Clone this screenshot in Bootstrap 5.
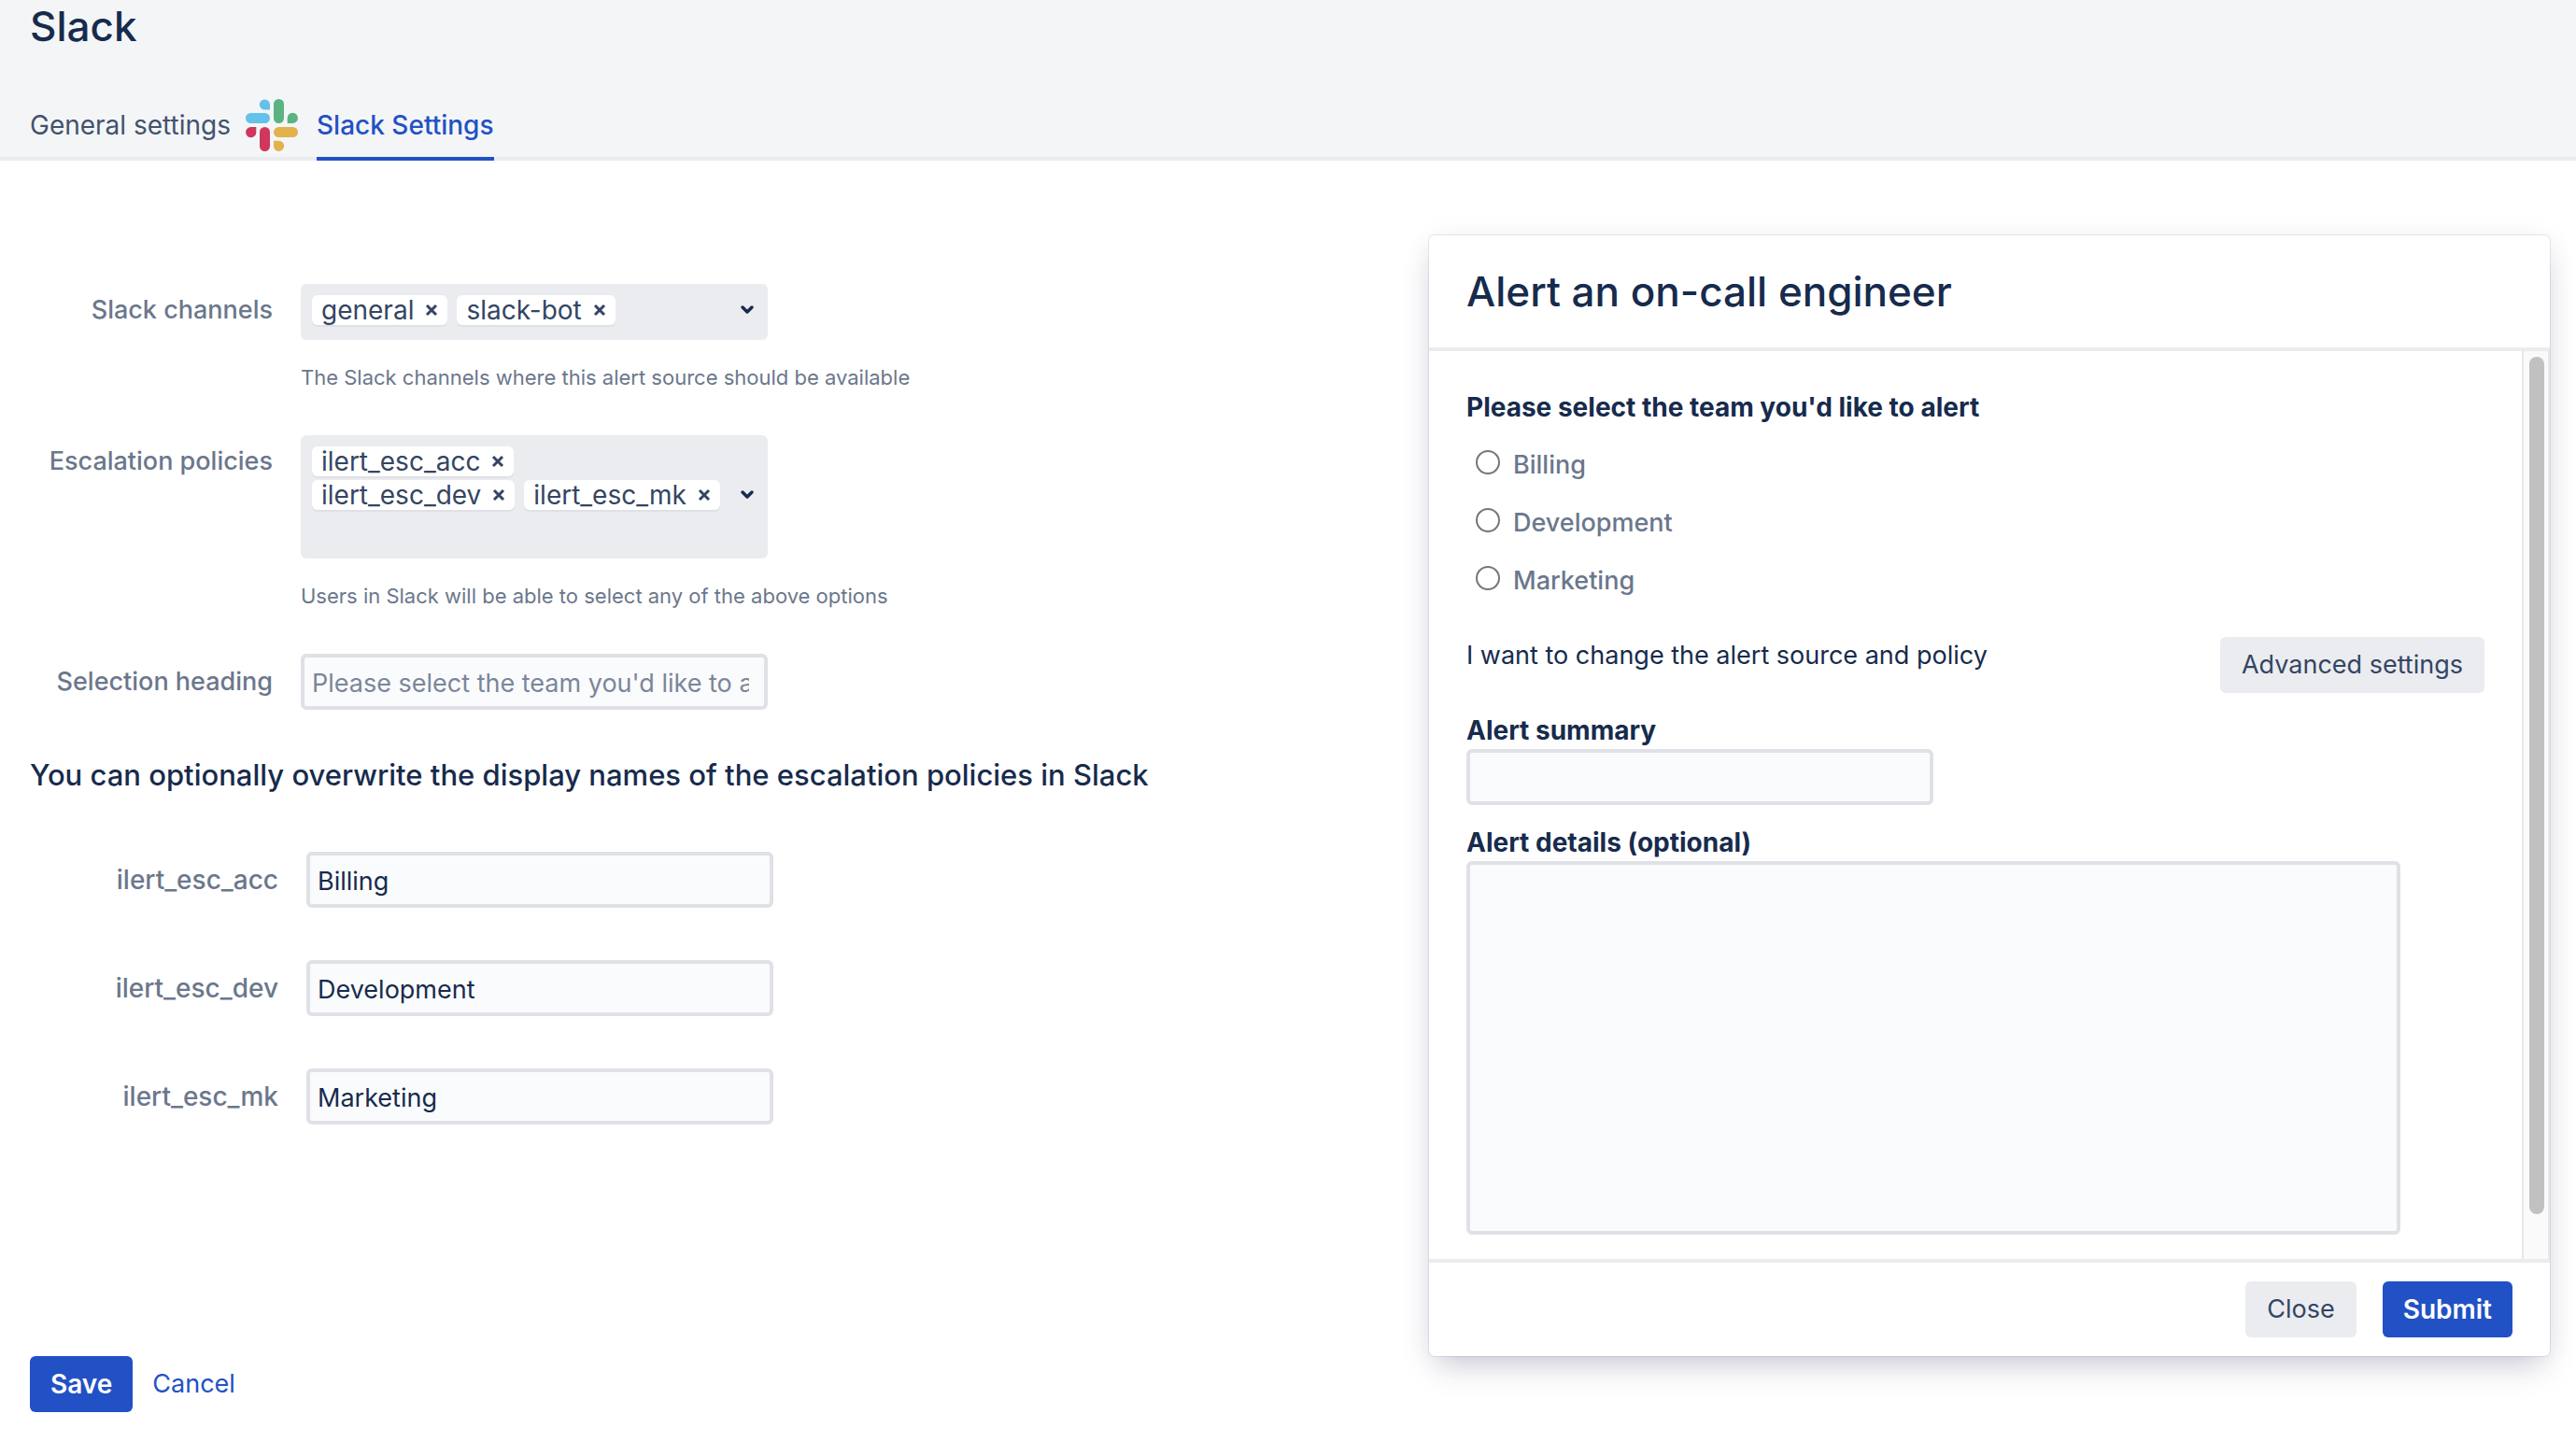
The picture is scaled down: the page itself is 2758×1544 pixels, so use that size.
<!DOCTYPE html>
<html lang="en">
<head>
<meta charset="utf-8">
<meta name="viewport" content="width=device-width, initial-scale=1">
<title>Slack settings</title>
<link href="https://cdn.jsdelivr.net/npm/bootstrap@5.3.0/dist/css/bootstrap.min.css" rel="stylesheet">
<style>
  :root { --ink: #172b4d; --muted: #6b778c; --soft: #ebecf0; --line: #dfe1e6; --blue: #2251c5; }
  body { font-family: Inter, "Liberation Sans", sans-serif; font-size: 27px; line-height: 40px; color: var(--ink); background: #fff; }
  .page-head { background: #f4f5f7; border-bottom: 4px solid var(--soft); padding: 0 32px; }
  .page-title { font-size: 44px; line-height: 56px; font-weight: 500; margin-bottom: 50px; }
  .tab-link { display: block; padding: 8px 0 14px; margin-bottom: -4px; border-bottom: 4px solid transparent; font-size: 28px; color: #42526e; text-decoration: none; }
  .tab-link.active { color: var(--blue); border-color: var(--blue); font-weight: 500; }
  .slack-mark { margin: 0 20px 0 16px; }
  .page-body { padding: 80px 28px 0 32px; gap: 32px; }
  .settings { padding-top: 52px; }
  .field-list { gap: 46px; }
  .field-row { display: flex; align-items: flex-start; gap: 30px; }
  .field-name { flex: 0 0 260px; padding-top: 8px; text-align: right; font-weight: 500; color: var(--muted); white-space: nowrap; }
  .field-name.for-input { padding-top: 10px; }
  .names { gap: 56px; margin-top: 62px; }
  .names .field-name { flex-basis: 266px; font-size: 28px; }
  .hint { font-size: 22px; line-height: 32px; color: var(--muted); margin: 24px 0 0; }
  .picker { width: 500px; padding: 12px 14px 16px 12px; background: var(--soft); border-radius: 6px; }
  .picker-sm { min-height: 60px; }
  .picker-lg { min-height: 132px; }
  .picker-tags { gap: 4px; }
  .tag-line { gap: 10px; }
  .tag { display: flex; align-items: center; gap: 12px; height: 32px; padding: 0 10px; font-size: 28px; line-height: 32px; color: #344563; background: #fff; border-radius: 6px; box-shadow: 0 2px 0 var(--line); white-space: nowrap; }
  .plain { display: flex; padding: 0; border: 0; background: none; color: inherit; }
  .field-box { width: 500px; height: 60px; padding: 2px 16px 0 8px; border: 4px solid var(--line); border-radius: 6px; background: #fafbfc; color: var(--ink); font-size: 27px; line-height: 40px; }
  .field-box::placeholder { color: #7a869a; }
  .field-box.area { width: 1000px; max-width: 100%; height: 400px; resize: none; display: block; }
  .section-title { font-size: 31px; line-height: 40px; font-weight: 500; margin: 50px 0 0; }
  .btn { --bs-btn-padding-x: 22px; --bs-btn-padding-y: 10px; --bs-btn-font-size: 28px; --bs-btn-line-height: 40px; --bs-btn-border-radius: 6px; --bs-btn-border-width: 0; white-space: nowrap; }
  .btn-main { --bs-btn-bg: var(--blue); --bs-btn-color: #fff; --bs-btn-hover-bg: #1b45ab; --bs-btn-hover-color: #fff; font-weight: 600; }
  .btn-soft { --bs-btn-font-size: 27px; --bs-btn-padding-x: 23px; --bs-btn-bg: var(--soft); --bs-btn-color: #344563; --bs-btn-hover-bg: var(--line); }
  .dialog { flex: 0 1 1200px; border-radius: 6px; background: #fff; box-shadow: 0 0 0 1px rgba(9,30,66,.09), 0 16px 32px -8px rgba(40,40,90,.25), 0 0 32px rgba(9,30,66,.04); }
  .dialog-head { padding: 32px 40px; border-bottom: 4px solid var(--soft); }
  .dialog-head h2 { font-size: 44px; line-height: 56px; font-weight: 500; margin: 0; }
  .dialog-form { padding: 40px 40px 26px; }
  .dialog-foot { padding: 20px 40px; gap: 28px; border-top: 4px solid var(--soft); }
  .strong-label { display: block; font-size: 28px; line-height: 40px; font-weight: 700; margin: 0; }
  .choices { gap: 22px; padding: 22px 0 0 10px; }
  .choice { gap: 14px; }
  .choice input { appearance: none; width: 26px; height: 26px; margin: 4px 0 0; border: 2px solid #767676; border-radius: 50%; background: #fff; }
  .choice input:checked { border: 8px solid var(--blue); }
  .choice label { font-weight: 500; color: var(--muted); }
  .advanced { margin-top: 40px; }
  .alert-field { margin-top: 20px; }
  .scroll-rail { flex: 0 0 30px; padding: 6px 4px 48px 6px; border: solid #e8e8e8; border-width: 0 2px; background: #fafafa; }
  .scroll-grip { width: 16px; height: 100%; border-radius: 8px; background: #c1c1c1; }
  .actions { padding: 0 32px 32px; gap: 21px; }
  .cancel { color: var(--blue); text-decoration: none; }
</style>
</head>
<body>
<header class="page-head">
  <h1 class="page-title">Slack</h1>
  <nav class="d-flex align-items-start" aria-label="Settings">
    <a class="tab-link" href="#general">General settings</a>
    <svg class="slack-mark flex-shrink-0" width="56" height="56" viewBox="0 0 56 56" aria-hidden="true">
      <g fill="#63c1ea"><path d="M26 11.600H20.600A5.600 5.600 0 1 1 26 5.800Z"/><rect x="0" y="15" width="26" height="11" rx="5.500"/></g>
      <g fill="#5bb381"><rect x="30" y="0" width="11" height="26" rx="5.500"/><path d="M44.700 26V20.600A5.600 5.600 0 1 1 50.500 26Z"/></g>
      <g fill="#e2b34b"><rect x="30" y="30" width="26" height="11" rx="5.500"/><path d="M30 44.700H35.400A5.600 5.600 0 1 1 30 50.500Z"/></g>
      <g fill="#cf375c"><path d="M11.300 30V35.400A5.600 5.600 0 1 1 5.500 30Z"/><rect x="15" y="30" width="11" height="26" rx="5.500"/></g>
    </svg>
    <a class="tab-link active" href="#slack" aria-current="page">Slack Settings</a>
  </nav>
</header>

<main>
  <div class="page-body d-flex align-items-start">
    <form class="settings flex-grow-1" id="settings-form">
      <div class="field-list d-flex flex-column">
        <div class="field-row">
          <span class="field-name" id="channels-name">Slack channels</span>
          <div>
            <div class="picker picker-sm d-flex justify-content-between align-items-center" role="group" aria-labelledby="channels-name">
              <div class="picker-tags d-flex flex-column align-self-start">
                <div class="tag-line d-flex">
                  <span class="tag">general <button class="plain" type="button" aria-label="Remove general"><svg width="14" height="14" viewBox="0 0 14 14"><path d="M2 2l10 10M12 2L2 12" stroke="currentColor" stroke-width="3"/></svg></button></span>
                  <span class="tag">slack-bot <button class="plain" type="button" aria-label="Remove slack-bot"><svg width="14" height="14" viewBox="0 0 14 14"><path d="M2 2l10 10M12 2L2 12" stroke="currentColor" stroke-width="3"/></svg></button></span>
                </div>
              </div>
              <button class="plain" type="button" aria-label="Show channels"><svg width="16" height="12" viewBox="0 0 16 12"><path d="M3 3l5 5 5-5" fill="none" stroke="#172b4d" stroke-width="3.500" stroke-linecap="round" stroke-linejoin="round"/></svg></button>
            </div>
            <p class="hint">The Slack channels where this alert source should be available</p>
          </div>
        </div>
        <div class="field-row">
          <span class="field-name" id="policies-name">Escalation policies</span>
          <div>
            <div class="picker picker-lg d-flex justify-content-between align-items-center" role="group" aria-labelledby="policies-name">
              <div class="picker-tags d-flex flex-column align-self-start">
                <div class="tag-line d-flex">
                  <span class="tag">ilert_esc_acc <button class="plain" type="button" aria-label="Remove ilert_esc_acc"><svg width="14" height="14" viewBox="0 0 14 14"><path d="M2 2l10 10M12 2L2 12" stroke="currentColor" stroke-width="3"/></svg></button></span>
                </div>
                <div class="tag-line d-flex">
                  <span class="tag">ilert_esc_dev <button class="plain" type="button" aria-label="Remove ilert_esc_dev"><svg width="14" height="14" viewBox="0 0 14 14"><path d="M2 2l10 10M12 2L2 12" stroke="currentColor" stroke-width="3"/></svg></button></span>
                  <span class="tag">ilert_esc_mk <button class="plain" type="button" aria-label="Remove ilert_esc_mk"><svg width="14" height="14" viewBox="0 0 14 14"><path d="M2 2l10 10M12 2L2 12" stroke="currentColor" stroke-width="3"/></svg></button></span>
                </div>
              </div>
              <button class="plain" type="button" aria-label="Show policies"><svg width="16" height="12" viewBox="0 0 16 12"><path d="M3 3l5 5 5-5" fill="none" stroke="#172b4d" stroke-width="3.500" stroke-linecap="round" stroke-linejoin="round"/></svg></button>
            </div>
            <p class="hint">Users in Slack will be able to select any of the above options</p>
          </div>
        </div>
        <div class="field-row">
          <label class="field-name for-input" for="heading">Selection heading</label>
          <input class="field-box" id="heading" type="text" placeholder="Please select the team you'd like to alert">
        </div>
      </div>

      <h3 class="section-title">You can optionally overwrite the display names of the escalation policies in Slack</h3>

      <div class="names d-flex flex-column">
        <div class="field-row">
          <label class="field-name for-input" for="name-acc">ilert_esc_acc</label>
          <input class="field-box" id="name-acc" type="text" value="Billing">
        </div>
        <div class="field-row">
          <label class="field-name for-input" for="name-dev">ilert_esc_dev</label>
          <input class="field-box" id="name-dev" type="text" value="Development">
        </div>
        <div class="field-row">
          <label class="field-name for-input" for="name-mk">ilert_esc_mk</label>
          <input class="field-box" id="name-mk" type="text" value="Marketing">
        </div>
      </div>
    </form>

    <section class="dialog" aria-labelledby="dialog-title">
      <div class="dialog-head"><h2 id="dialog-title">Alert an on-call engineer</h2></div>
      <div class="d-flex">
        <form class="dialog-form flex-grow-1" id="alert-form">
          <fieldset>
            <legend class="strong-label">Please select the team you'd like to alert</legend>
            <div class="choices d-flex flex-column">
              <div class="choice d-flex align-items-start"><input type="radio" name="team" id="team-billing"><label for="team-billing">Billing</label></div>
              <div class="choice d-flex align-items-start"><input type="radio" name="team" id="team-dev"><label for="team-dev">Development</label></div>
              <div class="choice d-flex align-items-start"><input type="radio" name="team" id="team-mk"><label for="team-mk">Marketing</label></div>
            </div>
          </fieldset>
          <div class="advanced d-flex justify-content-between align-items-start">
            <span>I want to change the alert source and policy</span>
            <button class="btn btn-soft" type="button">Advanced settings</button>
          </div>
          <div class="alert-field">
            <label class="strong-label" for="summary">Alert summary</label>
            <input class="field-box d-block" id="summary" type="text">
          </div>
          <div class="alert-field">
            <label class="strong-label" for="details">Alert details (optional)</label>
            <textarea class="field-box area" id="details"></textarea>
          </div>
        </form>
        <div class="scroll-rail" aria-hidden="true"><div class="scroll-grip"></div></div>
      </div>
      <div class="dialog-foot d-flex justify-content-end">
        <button class="btn btn-soft" type="button">Close</button>
        <button class="btn btn-main" type="submit" form="alert-form">Submit</button>
      </div>
    </section>
  </div>

  <div class="actions d-flex align-items-center">
    <button class="btn btn-main" type="submit" form="settings-form">Save</button>
    <a class="cancel" href="#cancel">Cancel</a>
  </div>
</main>
<script src="https://cdn.jsdelivr.net/npm/bootstrap@5.3.0/dist/js/bootstrap.bundle.min.js"></script>
</body>
</html>
